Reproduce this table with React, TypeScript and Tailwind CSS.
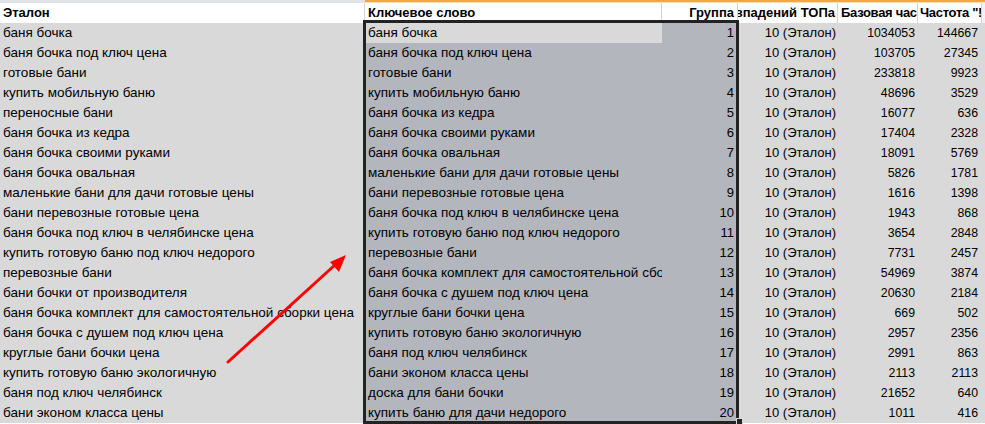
const rows: [string, string, number, number, number][] = [
  ["баня бочка", "баня бочка", 1, 1034053, 144667],
  ["баня бочка под ключ цена", "баня бочка под ключ цена", 2, 103705, 27345],
  ["готовые бани", "готовые бани", 3, 233818, 9923],
  ["купить мобильную баню", "купить мобильную баню", 4, 48696, 3529],
  ["переносные бани", "баня бочка из кедра", 5, 16077, 636],
  ["баня бочка из кедра", "баня бочка своими руками", 6, 17404, 2328],
  ["баня бочка своими руками", "баня бочка овальная", 7, 18091, 5769],
  ["баня бочка овальная", "маленькие бани для дачи готовые цены", 8, 5826, 1781],
  ["маленькие бани для дачи готовые цены", "бани перевозные готовые цена", 9, 1616, 1398],
  ["бани перевозные готовые цена", "баня бочка под ключ в челябинске цена", 10, 1943, 868],
  ["баня бочка под ключ в челябинске цена", "купить готовую баню под ключ недорого", 11, 3654, 2848],
  ["купить готовую баню под ключ недорого", "перевозные бани", 12, 7731, 2457],
  ["перевозные бани", "баня бочка комплект для самостоятельной сборки цена", 13, 54969, 3874],
  ["бани бочки от производителя", "баня бочка с душем под ключ цена", 14, 20630, 2184],
  ["баня бочка комплект для самостоятельной сборки цена", "круглые бани бочки цена", 15, 669, 502],
  ["баня бочка с душем под ключ цена", "купить готовую баню экологичную", 16, 2957, 2356],
  ["круглые бани бочки цена", "баня под ключ челябинск", 17, 2991, 863],
  ["купить готовую баню экологичную", "бани эконом класса цены", 18, 2113, 2113],
  ["баня под ключ челябинск", "доска для бани бочки", 19, 21652, 640],
  ["бани эконом класса цены", "купить баню для дачи недорого", 20, 1011, 416],
];

export default function App() {
  return (
    <div
      className="relative h-[424px] w-[985px] overflow-hidden bg-white text-[13.5px] leading-5 text-black"
      style={{ fontFamily: '"Liberation Sans", Arial, sans-serif' }}
    >
      {/* column header strip */}
      <div className="flex h-[3px]">
        <div className="w-[365px] bg-[#dfe3e8]" />
        <div className="flex-1 border-t-2 border-[#f2a541] bg-[#f7e2b8]" />
      </div>

      {/* header row */}
      <div className="flex h-5 bg-white text-[13px] font-bold">
        <div className="w-[365px] shrink-0 overflow-hidden whitespace-nowrap border-r border-[#d4d4d4] pl-[3px]">
          Эталон
        </div>
        <div className="w-[297px] shrink-0 overflow-hidden whitespace-nowrap border-r border-[#d4d4d4] pl-[3px]">
          Ключевое слово
        </div>
        <div className="flex w-[76px] shrink-0 justify-end overflow-hidden whitespace-nowrap border-r border-[#d4d4d4] pr-[3px]">
          <span className="shrink-0">Группа</span>
        </div>
        <div className="flex w-[100px] shrink-0 justify-end overflow-hidden whitespace-nowrap border-r border-[#d4d4d4] pr-[2px]">
          <span className="shrink-0">Количество совпадений ТОПа</span>
        </div>
        <div className="w-[80px] shrink-0 overflow-hidden whitespace-nowrap border-r border-[#d4d4d4] pl-[3px] tracking-[-0.3px]">
          Базовая частотность
        </div>
        <div className="w-[64px] shrink-0 overflow-hidden whitespace-nowrap border-r border-[#d4d4d4] pl-[2px] tracking-[-0.3px]">
          Частота "!Частота"
        </div>
        <div className="flex-1 bg-[#f2f2f2]" />
      </div>

      {/* data rows */}
      {rows.map(([etalon, keyword, group, base, exact], i) => (
        <div key={group} className="flex h-5 bg-[#d9d9d9]">
          <div className="w-[365px] shrink-0 overflow-hidden whitespace-nowrap pl-[3px]">{etalon}</div>
          <div
            className={
              i === 0
                ? "w-[297px] shrink-0 overflow-hidden whitespace-nowrap bg-[#d9d9d9] pl-[3px]"
                : "w-[297px] shrink-0 overflow-hidden whitespace-nowrap bg-[#b4b6bd] pl-[3px]"
            }
          >
            {keyword}
          </div>
          <div className="w-[76px] shrink-0 bg-[#b4b6bd] pr-[4px] text-right text-[13px]">{group}</div>
          <div className="w-[100px] shrink-0 whitespace-nowrap pr-[2px] text-right text-[13px]">10 (Эталон)</div>
          <div className="w-[80px] shrink-0 pr-[3px] text-right text-[12.3px]">{base}</div>
          <div className="w-[64px] shrink-0 pr-[4px] text-right text-[12.3px]">{exact}</div>
          <div className="flex-1" />
        </div>
      ))}

      {/* selection frame */}
      <div className="absolute left-[363px] top-[20px] h-[404px] w-[376px] border-[3px] border-[#232323]" />
      <div className="absolute left-[736px] top-[418px] h-[7px] w-[7px] border border-[#d9d9d9] bg-[#232323]" />

      {/* red arrow */}
      <svg className="absolute left-0 top-0" width="985" height="424">
        <line x1="228" y1="362" x2="336" y2="264" stroke="#ff0000" strokeWidth="3" strokeLinecap="round" />
        <polygon points="346,255 330,262 339,272" fill="#ff0000" />
      </svg>
    </div>
  );
}
